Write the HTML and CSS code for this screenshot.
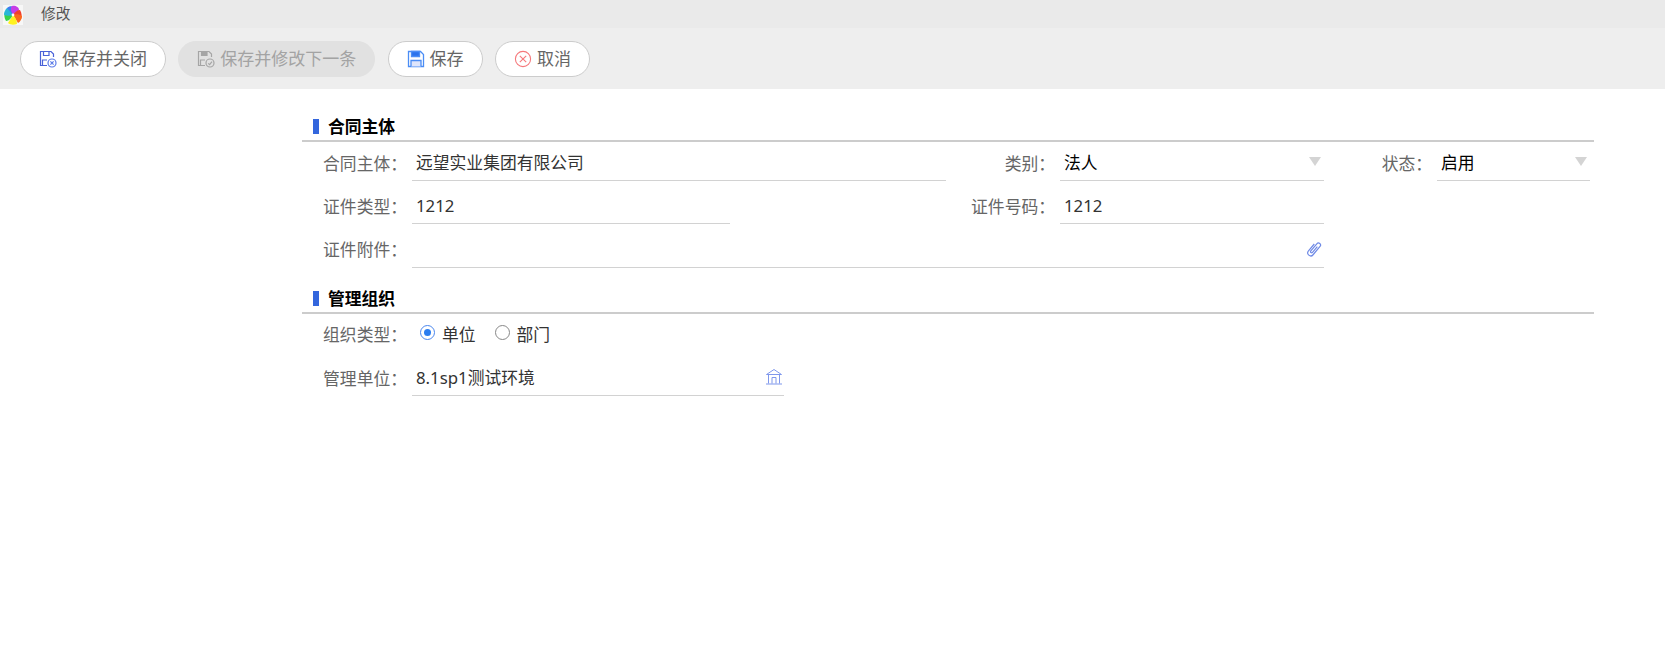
FILE: index.html
```html
<!DOCTYPE html>
<html lang="zh-CN">
<head>
<meta charset="utf-8">
<title>修改</title>
<link rel="stylesheet" href="styles.css">
</head>
<body>
<header class="titlebar">
  <svg class="logo" viewBox="0 0 20 20" width="20" height="20">
    <rect width="20" height="20" fill="#f7f7f7"/>
    <path d="M10 10 C6 8 3 6 4 3 C6 1 9 1 11 2 Z" fill="#3f7af0"/>
    <path d="M10 10 C8 6 7 3 9 1 C12 0 16 2 16 5 Z" fill="#c63ee6"/>
    <path d="M10 10 C12 7 14 5 17 5 C19 8 19 12 18 14 Z" fill="#f2402c"/>
    <path d="M10 10 C13 9 16 9 19 11 C19 14 17 17 15 18 Z" fill="#fb6a1c"/>
    <path d="M10 10 C12 12 14 15 14 19 C11 20 7 20 5 18 Z" fill="#fff21e"/>
    <path d="M10 10 C8 13 6 16 3 16 C1 13 1 9 2 7 Z" fill="#38d24a"/>
    <path d="M10 10 C7 11 4 11 1 10 C1 7 2 5 4 3 Z" fill="#29b6d8"/>
    <circle cx="10" cy="10" r="1.4" fill="#fff"/>
  </svg>
  <span class="title">修改</span>
</header>
<nav class="toolbar">
  <button class="btn" type="button">
    <svg class="ico" viewBox="0 0 18 18" width="18" height="18" fill="none" stroke="#4a62d8" stroke-width="1.2">
      <path d="M8 15.5H1.5V1.5H12L14.5 4V7"/><path d="M4.5 1.5V5.5H10V1.5"/><path d="M3.5 15V10H8"/>
      <circle cx="13" cy="13" r="4" stroke="#5a7ae8"/><path d="M11.4 11.4L14.6 14.6M14.6 11.4L11.4 14.6" stroke="#5a7ae8"/>
    </svg>保存并关闭</button>
  <button class="btn btn-off" type="button" disabled>
    <svg class="ico" viewBox="0 0 18 18" width="18" height="18" fill="none" stroke="#a5a5a5" stroke-width="1.2">
      <path d="M8 15.5H1.5V1.5H12L14.5 4V7"/><path d="M4.5 1.5V5.5H10V1.5" fill="#a5a5a5"/><path d="M3.5 15V10H8"/>
      <circle cx="13" cy="13" r="4"/><path d="M11.2 13.4L12.6 14.6L15 11.6"/>
    </svg>保存并修改下一条</button>
  <button class="btn" type="button">
    <svg class="ico" viewBox="0 0 18 18" width="18" height="18" fill="none" stroke="#4b8df5" stroke-width="1.3">
      <path d="M1.5 1.5H13.5L16.5 4.5V16.5H1.5Z"/><path d="M4.5 1.5H12.5V6.5H4.5Z" fill="#2b72ec"/><path d="M4 16.5V10.5H14V16.5" fill="#dfe5fb"/>
    </svg>保存</button>
  <button class="btn" type="button">
    <svg class="ico" viewBox="0 0 18 18" width="18" height="18" fill="none" stroke="#f5797c" stroke-width="1.1">
      <circle cx="9" cy="9" r="7.6"/><path d="M5.8 5.8L12.2 12.2M12.2 5.8L5.8 12.2"/>
    </svg>取消</button>
</nav>
<main class="form">
  <h2 class="section section-first"><span class="mark"></span>合同主体</h2>
  <div class="grid">
    <label class="lab">合同主体：</label>
    <div class="field">远望实业集团有限公司</div>
    <label class="lab">类别：</label>
    <div class="field sel">法人<i class="tri"></i></div>
    <label class="lab">状态：</label>
    <div class="field sel">启用<i class="tri"></i></div>

    <label class="lab">证件类型：</label>
    <div class="cell"><div class="field narrow">1212</div></div>
    <label class="lab">证件号码：</label>
    <div class="field">1212</div>
    <span class="blank"></span>

    <label class="lab">证件附件：</label>
    <div class="field wide">
      <svg class="clip" viewBox="0 0 18 18" width="18" height="18" fill="none" stroke="#6f8ae6" stroke-width="1.2">
        <path transform="rotate(40 9 9)" d="M6 5V14a3 3 0 0 0 6 0V3.2a2.1 2.1 0 0 0-4.2 0V12.5a1.1 1.1 0 0 0 2.2 0V5"/>
      </svg>
    </div>
    <span class="blank"></span>
  </div>

  <h2 class="section"><span class="mark"></span>管理组织</h2>
  <div class="grid">
    <label class="lab">组织类型：</label>
    <div class="radios">
      <span class="radio"><i class="dot on"></i>单位</span>
      <span class="radio"><i class="dot"></i>部门</span>
    </div>
    <label class="lab">管理单位：</label>
    <div class="cell"><div class="field unit">8.1sp1测试环境
      <svg class="bank" viewBox="0 0 18 18" width="18" height="18" fill="none" stroke="#7f97ec" stroke-width="1">
        <path d="M1.5 6.5L9 1.5L16.5 6.5Z"/><path d="M3.5 6.5V15.5M14.5 6.5V15.5M1 16H17"/><path d="M7 15.5V9.5H11V15.5"/>
      </svg></div></div>
  </div>
</main>
</body>
</html>
```
FILE: styles.css
```css
* { box-sizing: border-box; }
html, body { margin: 0; padding: 0; background: #fff; }
body {
  font-family: "Noto Sans", "Noto Sans CJK SC", sans-serif;
  font-size: 16.8px;
  color: #333;
  height: 652px;
  overflow: hidden;
}
.titlebar {
  height: 28px;
  background: #eaeaea;
  display: flex;
  align-items: center;
  padding-left: 3px;
}
.logo { display: block; margin-top: 1px; }
.title { margin: -3px 0 0 18px; font-size: 14.7px; color: #555; line-height: 28px; }
.toolbar {
  height: 61px;
  background: #eee;
  padding: 13px 0 0 20px;
  display: flex;
  gap: 12.3px;
  align-items: flex-start;
}
.btn {
  height: 36px;
  padding: 0 18px;
  border: 1px solid #ccc;
  border-radius: 18px;
  background: #fff;
  color: #666;
  font: inherit;
  font-size: 17px;
  line-height: 34px;
  display: flex;
  align-items: center;
  gap: 5px;
  white-space: nowrap;
}
.btn-off { background: #e1e1e1; border-color: #e1e1e1; color: #a3a3a3; }
.ico { display: block; flex: none; }
.form { margin-left: 302px; width: 1292px; }
.section {
  margin: 0;
  height: 46.4px;
  border-bottom: 2px solid #ccc;
  display: flex;
  align-items: flex-end;
  padding: 0 0 1px 11px;
  font-size: 16.8px;
  font-weight: 700;
  line-height: 24px;
  color: #000;
}
.section-first { height: 53px; }
.mark { width: 6px; height: 15px; background: #3366dd; margin: 0 9px 5px 0; }
.grid {
  display: grid;
  grid-template-columns: 110px 534px 114px 264px 113px 153px;
  grid-auto-rows: 35px;
  row-gap: 8.3px;
  padding-top: 4px;
}
.lab {
  display: flex;
  align-items: center;
  justify-content: flex-end;
  padding: 0 5px 2px 0;
  color: #666;
  white-space: nowrap;
}
.field {
  position: relative;
  height: 100%;
  border-bottom: 1px solid #d2d2d2;
  padding: 0 4px 2px;
  display: flex;
  align-items: center;
  color: #333;
}
.cell { height: 100%; }
.narrow { width: 318px; }
.unit { width: 372px; }
.wide { grid-column: span 3; }
.blank { grid-column: span 2; }
.sel { color: #000; }
.tri {
  position: absolute;
  right: 3px;
  top: 11px;
  width: 0;
  height: 0;
  border-left: 6.5px solid transparent;
  border-right: 6.5px solid transparent;
  border-top: 9px solid #d4d4d4;
}
.clip { position: absolute; right: 1px; top: 7px; }
.bank { position: absolute; right: 1px; top: 7px; }
.radios {
  grid-column: span 5;
  display: flex;
  align-items: center;
  gap: 19px;
  padding: 0 0 2px 8px;
}
.radio { display: flex; align-items: center; gap: 7px; color: #333; }
.dot {
  width: 15px;
  height: 15px;
  border: 1px solid #888;
  border-radius: 50%;
  background: #fff;
  margin-top: -3px;
  position: relative;
}
.dot.on { border-color: #4a86ee; }
.dot.on::after {
  content: "";
  position: absolute;
  left: 3px;
  top: 3px;
  width: 7px;
  height: 7px;
  border-radius: 50%;
  background: #2b7df0;
}
```
